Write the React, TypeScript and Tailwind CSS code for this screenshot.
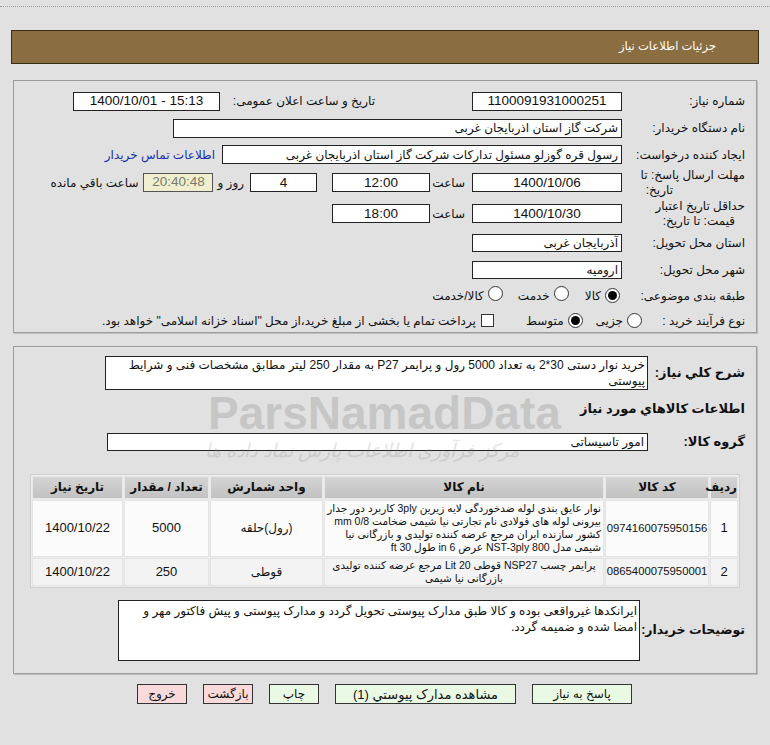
import React from "react";

const Box = ({ w, children, center = false, h = "h-[19px]", cls = "", ltr = false }: { w: string; children?: React.ReactNode; center?: boolean; h?: string; cls?: string; ltr?: boolean }) => (
  <div dir={ltr ? "ltr" : undefined} className={`${w} ${h} shrink-0 border border-[#222] bg-white flex items-center px-[3px] leading-none whitespace-nowrap overflow-hidden ${center ? "justify-center text-[13.5px]" : "justify-start"} ${cls}`}>
    {children}
  </div>
);

const Radio = ({ checked = false }: { checked?: boolean }) => (
  <span className="inline-flex w-[15px] h-[15px] rounded-full border border-[#333] bg-white items-center justify-center shrink-0">
    {checked && <span className="w-[9px] h-[9px] rounded-full bg-black" />}
  </span>
);

export default function App() {
  const th = "bg-gradient-to-b from-[#d4d4d4] to-[#c2c2c2] font-bold text-[12px] h-[23px] text-center border border-[#e8e8e8] p-0";
  const td1 = "bg-[#fbfbfb] border border-[#e4e4e4] p-0";
  const td2 = "bg-[#f3f3f3] border border-[#e4e4e4] p-0";
  return (
    <div dir="rtl" className="relative min-h-[745px] bg-[#e1e1e1] text-[12px] text-[#111] font-['Liberation_Sans','DejaVu_Sans',sans-serif] overflow-hidden">
      <div className="h-[7px] border-b border-dotted border-[#9a9a9a]" />
      {/* header */}
      <div className="mx-[11px] mt-[23px] h-[34px] bg-[#8b6d42] border border-[#3b2c16] flex items-center pr-[42px] text-white text-[11.5px]">
        جزئیات اطلاعات نیاز
      </div>

      {/* panel 1 */}
      <div className="mx-[13px] mt-[16px] border border-[#9c9c9c] shadow-[1px_1px_0_#bdbdbd] pt-[7px] pr-[11px]">
        <div className="flex items-center h-[26px]">
          <div className="w-[123px] shrink-0">شماره نیاز:</div>
          <Box w="w-[150px]" center>1100091931000251</Box>
          <div className="mr-[97px] w-[150px] shrink-0">تاریخ و ساعت اعلان عمومی:</div>
          <Box w="w-[147px]" center ltr cls="mr-[5px]">1400/10/01 - 15:13</Box>
        </div>
        <div className="flex items-center h-[28px]">
          <div className="w-[123px] shrink-0">نام دستگاه خریدار:</div>
          <Box w="w-[449px]">شرکت گاز استان اذربایجان غربی</Box>
        </div>
        <div className="flex items-center h-[25px]">
          <div className="w-[123px] shrink-0">ایجاد کننده درخواست:</div>
          <Box w="w-[400px]">رسول قره گوزلو مسئول تدارکات شرکت گاز استان اذربایجان غربی</Box>
          <a className="mr-[7px] text-[#1a2eb0] whitespace-nowrap">اطلاعات تماس خریدار</a>
        </div>
        <div className="flex items-center h-[31px]">
          <div className="w-[123px] shrink-0 leading-[15px]">مهلت ارسال پاسخ: تا<br /><span className="pr-[72px]">تاریخ:</span></div>
          <Box w="w-[150px]" center>1400/10/06</Box>
          <div className="mr-[7px] w-[30px] shrink-0">ساعت</div>
          <Box w="w-[98px]" center cls="mr-[5px]">12:00</Box>
          <Box w="w-[67px]" center cls="mr-[15px]">4</Box>
          <div className="mr-[6px] shrink-0">روز و</div>
          <div className="mr-[4px] w-[70px] h-[19px] border border-[#555] bg-[#efefcf] text-[#7a7a6a] text-[13.5px] flex items-center justify-center shrink-0">20:40:48</div>
          <div className="mr-[5px] shrink-0 whitespace-nowrap">ساعت باقي مانده</div>
        </div>
        <div className="flex items-center h-[31px]">
          <div className="w-[123px] shrink-0 leading-[15px]">حداقل تاریخ اعتبار<br /><span className="pr-[10px]">قیمت: تا تاریخ:</span></div>
          <Box w="w-[150px]" center>1400/10/30</Box>
          <div className="mr-[7px] w-[30px] shrink-0">ساعت</div>
          <Box w="w-[98px]" center cls="mr-[5px]">18:00</Box>
        </div>
        <div className="flex items-center h-[28px]">
          <div className="w-[123px] shrink-0">استان محل تحویل:</div>
          <Box w="w-[150px]" h="h-[18px]">آذربایجان غربی</Box>
        </div>
        <div className="flex items-center h-[25px]">
          <div className="w-[123px] shrink-0">شهر محل تحویل:</div>
          <Box w="w-[150px]" h="h-[18px]">ارومیه</Box>
        </div>
        <div className="flex items-center h-[27px]">
          <div className="w-[125px] shrink-0">طبقه بندی موضوعی:</div>
          <Radio checked />
          <span className="mr-[4px]">کالا</span>
          <span className="mr-[16px]"><Radio /></span>
          <span className="mr-[4px]">خدمت</span>
          <span className="mr-[15px]"><Radio /></span>
          <span className="mr-[4px]">کالا/خدمت</span>
        </div>
        <div className="flex items-center h-[23px]">
          <div className="w-[103px] shrink-0">نوع فرآیند خرید :</div>
          <Radio />
          <span className="mr-[4px]">جزیی</span>
          <span className="mr-[13px]"><Radio checked /></span>
          <span className="mr-[4px]">متوسط</span>
          <span className="mr-[32px] w-[13px] h-[13px] border border-[#333] bg-white shrink-0" />
          <span className="mr-[5px] whitespace-nowrap">پرداخت تمام یا بخشی از مبلغ خرید،از محل "اسناد خزانه اسلامی" خواهد بود.</span>
        </div>
      </div>

      {/* panel 2 */}
      <div className="mx-[13px] mt-[13px] border border-[#9c9c9c] shadow-[1px_1px_0_#bdbdbd] pt-[9px] pb-[12px] pr-[11px] pl-[16px]">
        <div className="flex items-center">
          <div className="w-[97px] shrink-0 font-bold text-[13px]">شرح کلي نياز:</div>
          <div className="w-[543px] h-[34px] border border-[#222] bg-white px-[2px] leading-[16px]">
            خرید نوار دستی 30*2 به تعداد 5000 رول و پرایمر P27 به مقدار 250 لیتر مطابق مشخصات فنی و شرایط پیوستی
          </div>
        </div>
        <div className="font-bold text-[13px] mt-[9px] h-[18px]">اطلاعات کالاهاي مورد نياز</div>
        <div className="flex items-center mt-[15px]">
          <div className="w-[97px] shrink-0 font-bold text-[13px]">گروه کالا:</div>
          <Box w="w-[541px]" h="h-[18px]">امور تاسیساتی</Box>
        </div>
        <table className="mt-[22px] mr-[5px] w-[710px] table-fixed border-separate border-spacing-[1px] border border-[#cfcfcf] bg-[#ececec] text-[12px]">
          <colgroup>
            <col className="w-[28px]" />
            <col className="w-[104px]" />
            <col className="w-[280px]" />
            <col className="w-[113px]" />
            <col className="w-[85px]" />
            <col />
          </colgroup>
          <thead>
            <tr>
              <th className={th}>ردیف</th>
              <th className={th}>کد کالا</th>
              <th className={th}>نام کالا</th>
              <th className={th}>واحد شمارش</th>
              <th className={th}>تعداد / مقدار</th>
              <th className={th}>تاریخ نیاز</th>
            </tr>
          </thead>
          <tbody>
            <tr className="h-[57px]">
              <td className={`${td1} text-center text-[13px]`}>1</td>
              <td className={`${td1} text-center text-[11.3px]`}>0974160075950156</td>
              <td className={`${td1} text-right px-[2px] text-[10.5px] leading-[13px]`}>نوار عایق بندی لوله ضدخوردگی لایه زیرین 3ply کاربرد دور جدار بیرونی لوله های فولادی نام تجارتی نیا شیمی ضخامت 0/8 mm کشور سازنده ایران مرجع عرضه کننده تولیدی و بازرگانی نیا شیمی مدل NST-3ply 800 عرض 6 in طول 30 ft</td>
              <td className={`${td1} text-center`}>(رول)حلقه</td>
              <td className={`${td1} text-center text-[13px]`}>5000</td>
              <td className={`${td1} text-center text-[13px]`}>1400/10/22</td>
            </tr>
            <tr className="h-[28px]">
              <td className={`${td2} text-center text-[13px]`}>2</td>
              <td className={`${td2} text-center text-[11.3px]`}>0865400075950001</td>
              <td className={`${td2} text-center px-[2px] text-[10.5px] leading-[13px]`}>پرایمر چسب NSP27 قوطی 20 Lit مرجع عرضه کننده تولیدی بازرگانی نیا شیمی</td>
              <td className={`${td2} text-center`}>قوطی</td>
              <td className={`${td2} text-center text-[13px]`}>250</td>
              <td className={`${td2} text-center text-[13px]`}>1400/10/22</td>
            </tr>
          </tbody>
        </table>
        <div className="flex items-center mt-[12px]">
          <div className="w-[105px] shrink-0 font-bold text-[12.5px] whitespace-nowrap">توضیحات خریدار:</div>
          <div className="w-[522px] h-[61px] border border-[#222] bg-white px-[2px] pt-[2px] leading-[16px]">
            ایرانکدها غیرواقعی بوده و کالا طبق مدارک پیوستی تحویل گردد و مدارک پیوستی و پیش فاکتور مهر و امضا شده و ضمیمه گردد.
          </div>
        </div>
      </div>

      {/* buttons */}
      <div className="flex mt-[10px] pr-[138px]">
        <button className="w-[100px] h-[20px] border border-[#333] bg-[#e9f9e3] text-[12px]">پاسخ به نیاز</button>
        <button className="mr-[16px] w-[181px] h-[20px] border border-[#333] bg-[#e9f9e3] text-[13px]">مشاهده مدارک پیوستي (1)</button>
        <button className="mr-[16px] w-[50px] h-[20px] border border-[#333] bg-[#e9f9e3] text-[12px]">چاپ</button>
        <button className="mr-[16px] w-[50px] h-[20px] border border-[#333] bg-[#f9d9d9] text-[12px]">بازگشت</button>
        <button className="mr-[16px] w-[50px] h-[20px] border border-[#333] bg-[#f9d9d9] text-[12px]">خروج</button>
      </div>

      {/* watermark */}
      <div className="pointer-events-none absolute left-[208px] top-[390px] leading-none text-[46px] font-bold text-[#7a7a7a] opacity-25 font-['Liberation_Sans',sans-serif]" dir="ltr">ParsNamadData</div>
      <div className="pointer-events-none absolute left-[205px] top-[441px] leading-none text-[19px] italic text-[#7a7a7a] opacity-20 whitespace-nowrap">مرکز فرآوری اطلاعات پارس نماد داده ها</div>
    </div>
  );
}
